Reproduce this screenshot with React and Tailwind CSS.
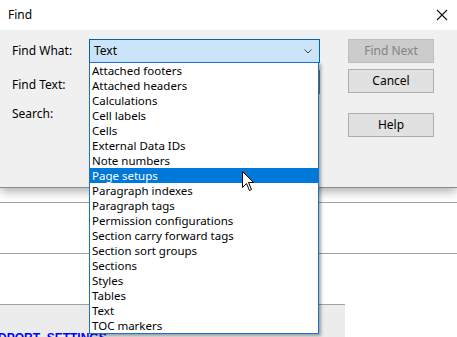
import React from 'react';

const items = [
    'Attached footers',
    'Attached headers',
    'Calculations',
    'Cell labels',
    'Cells',
    'External Data IDs',
    'Note numbers',
    'Page setups',
    'Paragraph indexes',
    'Paragraph tags',
    'Permission configurations',
    'Section carry forward tags',
    'Section sort groups',
    'Sections',
    'Styles',
    'Tables',
    'Text',
    'TOC markers'
];

const font = { fontFamily: '"Noto Sans", "Open Sans", sans-serif' };

const DialogButton = ({ children, disabled }) => (
    <div
        className={`w-[86px] h-[24px] flex items-center justify-center border text-[12px] ${
            disabled ? 'bg-[#cccccc] border-[#bfbfbf] text-[#838383]' : 'bg-[#e1e1e1] border-[#adadad] text-black'
        }`}
    >
        {children}
    </div>
);

const App = () => {
    return (
        <div className="relative w-[457px] h-[337px] overflow-hidden bg-white text-black" style={font}>
            {/* Find dialog */}
            <div className="relative z-10 shadow-[0_3px_10px_rgba(0,0,0,0.35)]">
                <div className="h-[30px] bg-white flex items-center justify-between pl-[8px] pr-[9px]">
                    <span className="text-[12px]">Find</span>
                    <svg width="12" height="12" viewBox="0 0 12 12" className="mt-[-1px]">
                        <path d="M1 1 L11 11 M11 1 L1 11" stroke="#111" strokeWidth="1.1" />
                    </svg>
                </div>
                <div className="h-[158px] bg-[#f0f0f0] border-b border-[#8a8a8a] flex pt-[9px]">
                    <div className="w-[89px] pl-[12px] flex flex-col text-[12px]">
                        <div className="h-[24px] flex items-center">Find What:</div>
                        <div className="h-[24px] mt-[10px] flex items-center">Find Text:</div>
                        <div className="mt-[7px] h-[20px] flex items-center">Search:</div>
                    </div>
                    <div className="w-[231px] flex flex-col">
                        <div className="h-[24px] bg-[#cce4f7] border border-[#0063b1] flex items-center justify-between pl-[4px] pr-[7px] text-[12px]">
                            <span>Text</span>
                            <svg width="8" height="5" viewBox="0 0 8 5">
                                <path d="M0.5 0.5 L4 4 L7.5 0.5" fill="none" stroke="#444" strokeWidth="1" />
                            </svg>
                        </div>
                        <div className="h-[24px] mt-[7px] bg-white border border-[#7a7a7a]" />
                    </div>
                    <div className="ml-[28px] flex flex-col">
                        <DialogButton disabled>Find Next</DialogButton>
                        <div className="mt-[6px]">
                            <DialogButton>Cancel</DialogButton>
                        </div>
                        <div className="mt-[20px]">
                            <DialogButton>Help</DialogButton>
                        </div>
                    </div>
                </div>
            </div>

            {/* Report grid behind the dialog */}
            <div className="flex flex-col">
                <div className="h-[14px]" />
                <div className="h-[51px] border-t border-[#a0a0a0]" />
                <div className="h-[51px] border-t border-[#a0a0a0]" />
                <div className="h-[33px] w-[345px] border-t border-[#a0a0a0] bg-[#ececec] flex flex-col justify-end">
                    <div
                        className="text-[12px] font-bold text-[#0000ff] leading-[12px] h-[5px] overflow-hidden whitespace-nowrap ml-[-2px]"
                        style={{ fontFamily: '"Liberation Sans", Arial, sans-serif' }}
                    >
                        DPORT_SETTINGS
                    </div>
                </div>
            </div>

            {/* Drop-down list */}
            <div className="absolute z-20 left-[89px] top-[62px] w-[230px] h-[272px] bg-white border border-[#1a73c9] shadow-[2px_2px_3px_rgba(0,0,0,0.35)] flex flex-col text-[11.5px]">
                {items.map((item) => (
                    <div
                        key={item}
                        className={`h-[15px] leading-[15px] pl-[2px] whitespace-nowrap ${
                            item === 'Page setups' ? 'bg-[#0078d7] text-white' : ''
                        }`}
                    >
                        {item}
                    </div>
                ))}
            </div>

            {/* Mouse pointer */}
            <svg className="absolute z-30 left-[242px] top-[171px]" width="13" height="21" viewBox="0 0 13 21">
                <path
                    d="M0.5 0.5 L0.5 16.5 L4.5 12.5 L7.5 19.5 L9.5 18.5 L6.5 11.5 L11.5 11.5 Z"
                    fill="#fff"
                    stroke="#000"
                    strokeWidth="1"
                    strokeLinejoin="round"
                />
            </svg>
        </div>
    );
};

export default App;
